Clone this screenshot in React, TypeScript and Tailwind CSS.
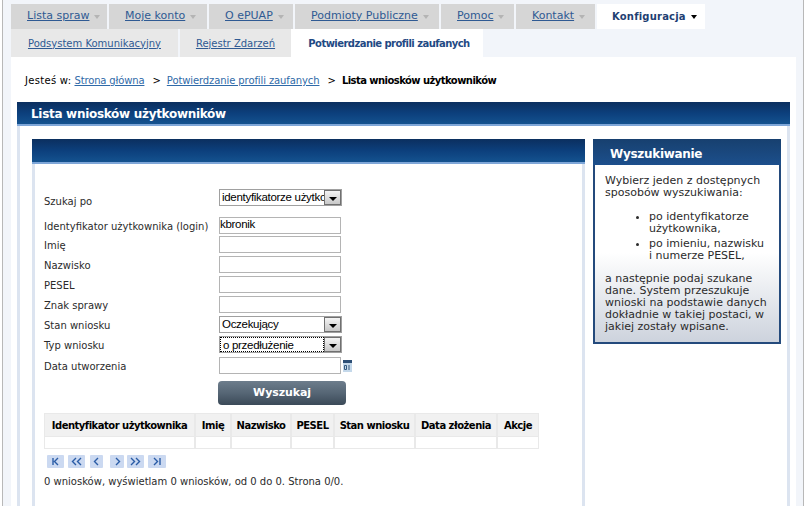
import React from 'react';

const topTabs = [
  { label: 'Lista spraw', w: 'w-[96px]' },
  { label: 'Moje konto', w: 'w-[98px]' },
  { label: 'O ePUAP', w: 'w-[84px]' },
  { label: 'Podmioty Publiczne', w: 'w-[144px]' },
  { label: 'Pomoc', w: 'w-[73px]' },
  { label: 'Kontakt', w: 'w-[79px]' },
];

const columns = [
  { label: 'Identyfikator użytkownika', w: 'w-[149px]' },
  { label: 'Imię', w: 'w-[34px]' },
  { label: 'Nazwisko', w: 'w-[58px]' },
  { label: 'PESEL', w: 'w-[41px]' },
  { label: 'Stan wniosku', w: 'w-[79px]' },
  { label: 'Data złożenia', w: 'w-[80px]' },
  { label: 'Akcje', w: 'w-[40px]' },
];

const pager = [
  { d: 'M6 3v7M11 3L7.5 6.5 11 10', vw: 17, mr: 'mr-[4px]' },
  { d: 'M8 3L4.5 6.5 8 10M13 3L9.5 6.5 13 10', vw: 17, mr: 'mr-[5px]' },
  { d: 'M8 3L4.5 6.5 8 10', vw: 13, mr: 'mr-[7px]' },
  { d: 'M6 3l3.5 3.5L6 10', vw: 14, mr: 'mr-[3px]' },
  { d: 'M4 3l3.5 3.5L4 10M9 3l3.5 3.5L9 10', vw: 17, mr: 'mr-[4px]' },
  { d: 'M6 3l3.5 3.5L6 10M12 3v7', vw: 18, mr: '' },
];

const Caret = ({ className }: { className: string }) => (
  <span className={`ml-[5px] inline-block h-0 w-0 border-x-[3px] border-t-[4px] border-x-transparent ${className}`} />
);

const Field = ({ label, value, mt }: { label: string; value?: string; mt: string }) => (
  <div className={`flex h-[17px] items-center ${mt}`}>
    <label className="w-[175px] shrink-0 pt-[2px]">{label}</label>
    <input
      readOnly
      value={value ?? ''}
      className="h-[17px] w-[122px] border border-[#b4b4b4] bg-white px-0 pb-[1px] font-['Liberation_Sans',sans-serif] text-[11.5px] tracking-[-0.3px] text-black outline-none"
    />
  </div>
);

const Dropdown = ({ label, value, mt, focused, labelPad = 'pt-[2px]' }: { label: string; value: string; mt: string; focused?: boolean; labelPad?: string }) => (
  <div className={`flex h-[17px] items-center ${mt}`}>
    <label className={`w-[175px] shrink-0 ${labelPad}`}>{label}</label>
    <div className="flex h-[17px] w-[123px] items-stretch border border-[#a0a0a0] bg-white font-['Liberation_Sans',sans-serif] text-[11.5px] tracking-[-0.3px] text-black">
      <div className={`min-w-0 flex-1 overflow-hidden pl-[2px] leading-[15px] whitespace-nowrap ${focused ? 'border border-dotted border-black leading-[13px]' : ''}`}>
        {value}
      </div>
      <div className="flex w-[17px] shrink-0 items-center justify-center border border-[#707070] bg-gradient-to-b from-[#f4f4f4] to-[#c8c8c8]">
        <span className="mt-[3px] h-0 w-0 border-x-[4px] border-t-[4px] border-x-transparent border-t-black" />
      </div>
    </div>
  </div>
);

const App = () => {
  return (
    <div className="ml-[2px] h-[506px] w-[802px] overflow-hidden border-x border-[#b8b8b8] bg-[#f2f5fa] font-['DejaVu_Sans',sans-serif] text-[10px] text-[#2b2b2b]">
      {/* Tabs */}
      <div className="ml-[8px] flex h-[29px] items-end gap-[2px]">
        {topTabs.map((t) => (
          <div key={t.label} className={`flex h-[25px] items-center bg-[#d6d6d6] pl-[16px] text-[11px] text-[#2f5a93] ${t.w}`}>
            <span className="underline">{t.label}</span>
            <Caret className="border-t-[#b4b4b4]" />
          </div>
        ))}
        <div className="flex h-[25px] w-[108px] items-center bg-white pl-[15px] font-bold tracking-[0.2px] text-[#1f3f73]">
          Konfiguracja
          <Caret className="border-t-black" />
        </div>
      </div>
      <div className="ml-[8px] flex h-[28px]">
        <div className="flex w-[167px] items-center justify-center bg-[#e8e8e8] text-[#2f5a93] underline">Podsystem Komunikacyjny</div>
        <div className="ml-[2px] flex w-[111px] items-center justify-center bg-[#e8e8e8] text-[#2f5a93] underline">Rejestr Zdarzeń</div>
        <div className="flex w-[192px] items-center justify-center bg-white pl-[4px] font-bold tracking-[-0.55px] text-[#1f4a84]">Potwierdzanie profili zaufanych</div>
      </div>

      {/* Main */}
      <div className="ml-[8px] h-[449px] w-[785px] bg-white px-[6px]">
        <div className="flex h-[45px] items-center pt-[2px] pl-[8px] text-black">
          <span className="tracking-[0.3px]">Jesteś w:</span>
          <a className="ml-[3px] tracking-[-0.15px] text-[#2f6aa8] underline">Strona główna</a>
          <span className="mr-[6px] ml-[8px]">&gt;</span>
          <a className="tracking-[-0.1px] text-[#2f6aa8] underline">Potwierdzanie profili zaufanych</a>
          <span className="mr-[6px] ml-[8px]">&gt;</span>
          <b className="tracking-[-0.55px]">Lista wniosków użytkowników</b>
        </div>

        <div className="flex h-[24px] items-center border-b-[2px] border-[#7ea6d8] bg-gradient-to-b from-[#0b2f5f] via-[#0c3f7c] to-[#14528f] pt-[2px] pl-[14px] text-[12px] font-bold tracking-[-0.3px] text-white">
          Lista wniosków użytkowników
        </div>

        <div className="flex h-[380px] gap-[8px] border-x-[3px] border-[#dce4f0] pt-[13px] pl-[12px]">
          <section className="w-[553px] shrink-0">
            <div className="h-[25px] border-b-[2px] border-[#7ea6d8] bg-gradient-to-b from-[#0b2f5f] via-[#0c3f7c] to-[#14528f]" />
            <div className="h-[342px] border-x-[3px] border-[#dce4f0] pt-[25px] pl-[9px]">
              <Dropdown label="Szukaj po" value="identyfikatorze użytkownika" mt="mt-0" labelPad="pt-[8px]" />
              <Field label="Identyfikator użytkownika (login)" value="kbronik" mt="mt-[11px]" />
              <Field label="Imię" mt="mt-[2px]" />
              <Field label="Nazwisko" mt="mt-[3px]" />
              <Field label="PESEL" mt="mt-[3px]" />
              <Field label="Znak sprawy" mt="mt-[3px]" />
              <Dropdown label="Stan wniosku" value="Oczekujący" mt="mt-[3px]" />
              <Dropdown label="Typ wniosku" value="o przedłużenie" mt="mt-[3px]" focused />
              <div className="mt-[4px] flex h-[17px] items-center">
                <label className="w-[175px] shrink-0 pt-[2px]">Data utworzenia</label>
                <input readOnly className="h-[17px] w-[122px] border border-[#b4b4b4] bg-white" />
                <svg width="9" height="12" viewBox="0 0 9 12" className="ml-[2px]">
                  <rect width="9" height="12" fill="#c4d8ea" />
                  <rect width="9" height="3" fill="#2c4f76" />
                  <path d="M1.5 5.5h2v4h-2zM6 5v5" fill="none" stroke="#33597f" strokeWidth="1" />
                </svg>
              </div>
              <div className="mt-[7px] ml-[174px] flex h-[24px] w-[128px] items-center justify-center rounded-[4px] bg-gradient-to-b from-[#6d7d8c] via-[#566675] to-[#3b4a58] text-[11px] font-bold tracking-[-0.1px] text-white">
                Wyszukaj
              </div>

              <div className="mt-[8px] w-[495px] bg-[#e9e9e9] p-[1px]">
                <div className="flex h-[22px] gap-[2px] font-bold tracking-[-0.5px] whitespace-nowrap text-black">
                  {columns.map((c) => (
                    <div key={c.label} className={`flex items-center justify-center bg-[#f1f1f1] ${c.w}`}>{c.label}</div>
                  ))}
                </div>
                <div className="mt-[1px] flex h-[11px] gap-[2px]">
                  {columns.map((c) => (
                    <div key={c.label} className={`bg-white ${c.w}`} />
                  ))}
                </div>
              </div>

              <div className="mt-[6px] ml-[3px] flex">
                {pager.map((p) => (
                  <svg key={p.d} width={p.vw} height="13" viewBox={`0 0 ${p.vw} 13`} className={`rounded-[1px] bg-[#cbd9f1] ${p.mr}`}>
                    <path d={p.d} fill="none" stroke="#2a5ca6" strokeWidth="1.4" />
                  </svg>
                ))}
              </div>
              <p className="mt-[6px]">0 wniosków, wyświetlam 0 wniosków, od 0 do 0. Strona 0/0.</p>
            </div>
          </section>

          {/* Wyszukiwanie */}
          <aside className="h-[205px] w-[188px] shrink-0 border-[2px] border-t-0 border-[#244a7c] bg-gradient-to-b from-white from-[56%] to-[#cdd3dd]">
            <div className="-mx-[2px] flex h-[26px] items-center bg-gradient-to-b from-[#17406f] to-[#1c4f8c] pt-[3px] pl-[17px] text-[12px] font-bold tracking-[-0.3px] text-white">
              Wyszukiwanie
            </div>
            <div className="px-[10px] pt-[10px] text-[11px] leading-[12px]">
              <p>Wybierz jeden z dostępnych sposobów wyszukiwania:</p>
              <ul className="mt-[12px] list-disc pl-[44px]">
                <li>po identyfikatorze użytkownika,</li>
                <li className="mt-[3px]">po imieniu, nazwisku i numerze PESEL,</li>
              </ul>
              <p className="mt-[11px]">a następnie podaj szukane dane. System przeszukuje wnioski na podstawie danych dokładnie w takiej postaci, w jakiej zostały wpisane.</p>
            </div>
          </aside>
        </div>
      </div>
    </div>
  );
};

export default App;
